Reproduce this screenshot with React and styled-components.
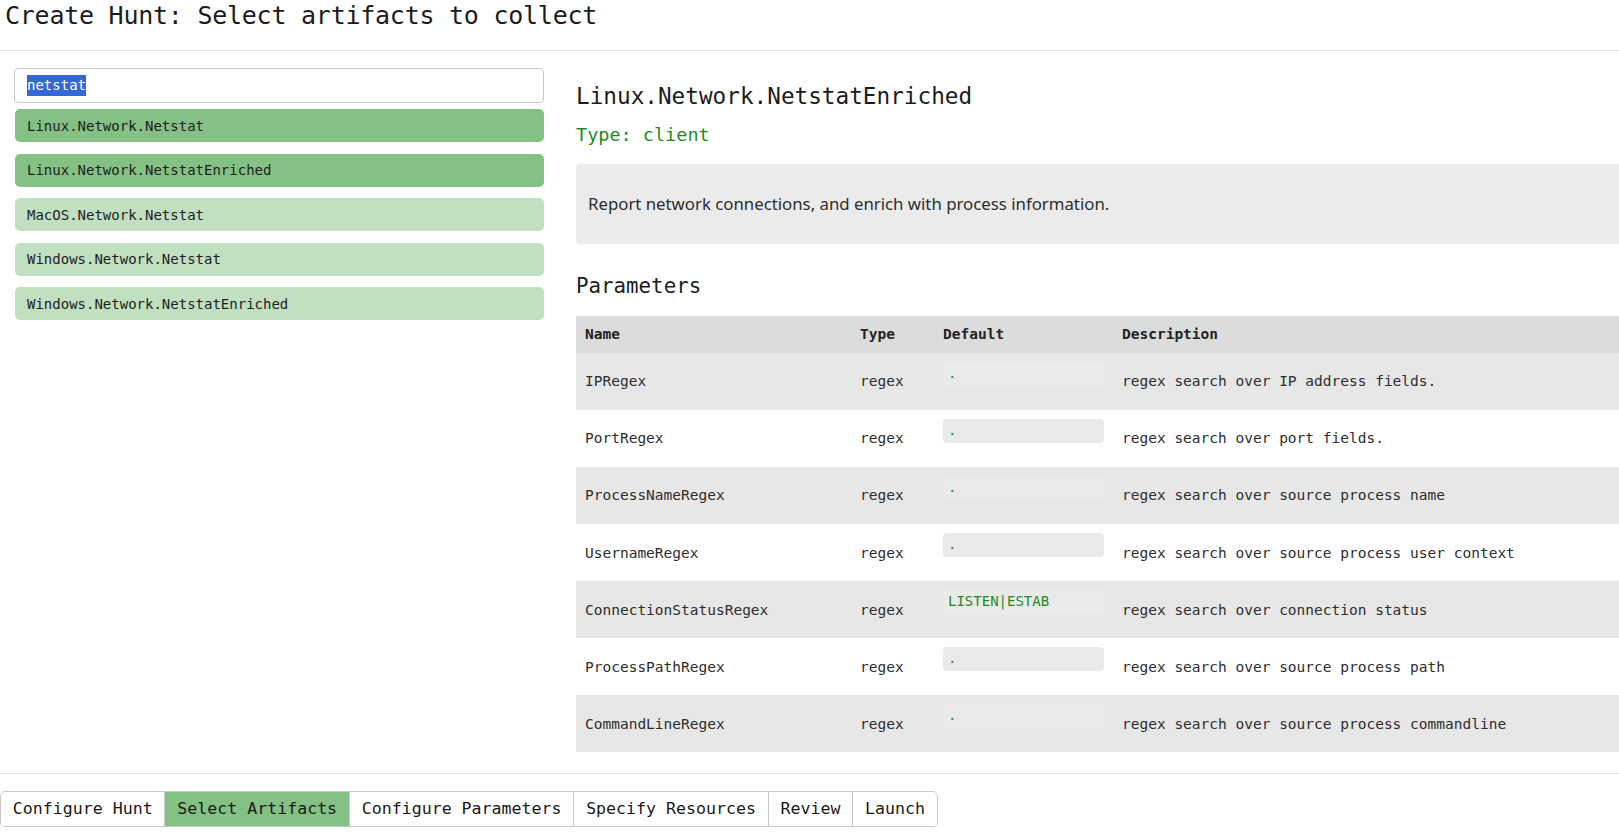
import React from "react";
import styled, { createGlobalStyle } from "styled-components";

const GlobalStyle = createGlobalStyle`
  html, body { margin: 0; padding: 0; background: #fff; }
  body {
    font-family: "DejaVu Sans Mono", monospace;
    color: #222;
  }
  * { box-sizing: border-box; }
`;

const Page = styled.div`
  display: flex;
  flex-direction: column;
  height: 100vh;
  overflow: hidden;
`;

const Header = styled.header`
  border-bottom: 1px solid #e2e2e2;
  padding: 0 0 19px 5px;
`;

const PageTitle = styled.h1`
  margin: 0;
  font-size: 25px;
  line-height: 31px;
  font-weight: normal;
  letter-spacing: -0.25px;
  color: #1c1c1c;
`;

const Main = styled.main`
  flex: 1;
  min-height: 0;
  display: grid;
  grid-template-columns: 530px 1fr;
  column-gap: 32px;
  padding-left: 14px;
  overflow: hidden;
`;

const LeftPanel = styled.section`
  padding-top: 17px;
  display: flex;
  flex-direction: column;
`;

const SearchBox = styled.div`
  height: 35px;
  border: 1px solid #c8c8c8;
  border-radius: 4px;
  padding: 0 12px;
  display: flex;
  align-items: center;
  font-size: 14px;
`;

const Selected = styled.span`
  background: #3468d6;
  color: #fff;
  line-height: 21px;
`;

const ArtifactList = styled.ul`
  list-style: none;
  margin: 6px 0 0;
  padding: 0 0 0 1px;
  display: flex;
  flex-direction: column;
  gap: 11.5px;
`;

const ArtifactItem = styled.li`
  height: 33px;
  border-radius: 5px;
  padding: 0 12px;
  display: flex;
  align-items: center;
  font-size: 14px;
  color: #1e1e1e;
  background: ${(p) => (p.$selected ? "#84c184" : "#c1dfc1")};
`;

const RightPanel = styled.section`
  min-width: 0;
  padding-top: 31px;
  display: flex;
  flex-direction: column;
`;

const ArtifactTitle = styled.h2`
  margin: 0;
  font-size: 22.7px;
  line-height: 28px;
  font-weight: normal;
  color: #1c1c1c;
`;

const TypeLine = styled.div`
  margin-top: 13px;
  font-size: 18.5px;
  line-height: 24px;
  color: #1f8c1f;
`;

const DescBox = styled.div`
  margin-top: 16.7px;
  background: #ebebeb;
  border-radius: 4px 0 0 4px;
  padding: 29px 12px;
  font-family: "Noto Sans", "Open Sans", sans-serif;
  font-size: 16.8px;
  line-height: 22px;
  color: #2e2e2e;
`;

const SectionTitle = styled.h3`
  margin: 29.4px 0 0;
  font-size: 20.8px;
  line-height: 26px;
  font-weight: normal;
  color: #1c1c1c;
`;

const ParamTable = styled.table`
  margin-top: 16.6px;
  width: 100%;
  border-collapse: collapse;
  table-layout: fixed;
  font-size: 14.5px;
  color: #2e2e2e;
`;

const HeadCell = styled.th`
  height: 37px;
  background: #dcdcdc;
  text-align: left;
  padding: 0 9px;
  font-weight: bold;
  color: #222;
`;

const Row = styled.tr`
  background: ${(p) => (p.$odd ? "#e7e7e7" : "#fff")};
`;

const Cell = styled.td`
  height: 57.1px;
  padding: 0 9px;
  vertical-align: middle;
  white-space: nowrap;
`;

const DefaultCell = styled(Cell)`
  vertical-align: top;
  padding-top: 9px;
`;

const DefaultBox = styled.div`
  height: 24px;
  background: #eaeaea;
  border-radius: 4px;
  padding: 0 5px;
  line-height: 23.5px;
  color: #1f8c1f;
  font-size: 14px;
`;

const Footer = styled.footer`
  border-top: 1px solid #e2e2e2;
  padding: 17px 0 9px;
`;

const TabGroup = styled.nav`
  display: inline-flex;
  border: 1px solid #c8c8c8;
  border-radius: 5px;
  overflow: hidden;
  height: 36px;
`;

const Tab = styled.div`
  padding: 0 11.8px;
  font-size: 16.6px;
  line-height: 34px;
  color: #1a1a1a;
  background: ${(p) => (p.$active ? "#84c184" : "#fff")};
  & + & {
    border-left: 1px solid #c8c8c8;
  }
`;

const artifacts = [
  { name: "Linux.Network.Netstat", selected: true },
  { name: "Linux.Network.NetstatEnriched", selected: true },
  { name: "MacOS.Network.Netstat", selected: false },
  { name: "Windows.Network.Netstat", selected: false },
  { name: "Windows.Network.NetstatEnriched", selected: false },
];

const params = [
  ["IPRegex", "regex", ".", "regex search over IP address fields."],
  ["PortRegex", "regex", ".", "regex search over port fields."],
  ["ProcessNameRegex", "regex", ".", "regex search over source process name"],
  ["UsernameRegex", "regex", ".", "regex search over source process user context"],
  ["ConnectionStatusRegex", "regex", "LISTEN|ESTAB", "regex search over connection status"],
  ["ProcessPathRegex", "regex", ".", "regex search over source process path"],
  ["CommandLineRegex", "regex", ".", "regex search over source process commandline"],
];

const tabs = [
  "Configure Hunt",
  "Select Artifacts",
  "Configure Parameters",
  "Specify Resources",
  "Review",
  "Launch",
];

export default function App() {
  return (
    <>
      <GlobalStyle />
      <Page>
        <Header>
          <PageTitle>Create Hunt: Select artifacts to collect</PageTitle>
        </Header>
        <Main>
          <LeftPanel>
            <SearchBox>
              <Selected>netstat</Selected>
            </SearchBox>
            <ArtifactList>
              {artifacts.map((a) => (
                <ArtifactItem key={a.name} $selected={a.selected}>
                  {a.name}
                </ArtifactItem>
              ))}
            </ArtifactList>
          </LeftPanel>
          <RightPanel>
            <ArtifactTitle>Linux.Network.NetstatEnriched</ArtifactTitle>
            <TypeLine>Type: client</TypeLine>
            <DescBox>
              Report network connections, and enrich with process information.
            </DescBox>
            <SectionTitle>Parameters</SectionTitle>
            <ParamTable>
              <colgroup>
                <col style={{ width: 275 }} />
                <col style={{ width: 83 }} />
                <col style={{ width: 179 }} />
                <col />
              </colgroup>
              <thead>
                <tr>
                  <HeadCell>Name</HeadCell>
                  <HeadCell>Type</HeadCell>
                  <HeadCell>Default</HeadCell>
                  <HeadCell>Description</HeadCell>
                </tr>
              </thead>
              <tbody>
                {params.map((p, i) => (
                  <Row key={p[0]} $odd={i % 2 === 0}>
                    <Cell>{p[0]}</Cell>
                    <Cell>{p[1]}</Cell>
                    <DefaultCell>
                      <DefaultBox>{p[2]}</DefaultBox>
                    </DefaultCell>
                    <Cell>{p[3]}</Cell>
                  </Row>
                ))}
              </tbody>
            </ParamTable>
          </RightPanel>
        </Main>
        <Footer>
          <TabGroup>
            {tabs.map((t) => (
              <Tab key={t} $active={t === "Select Artifacts"}>
                {t}
              </Tab>
            ))}
          </TabGroup>
        </Footer>
      </Page>
    </>
  );
}
